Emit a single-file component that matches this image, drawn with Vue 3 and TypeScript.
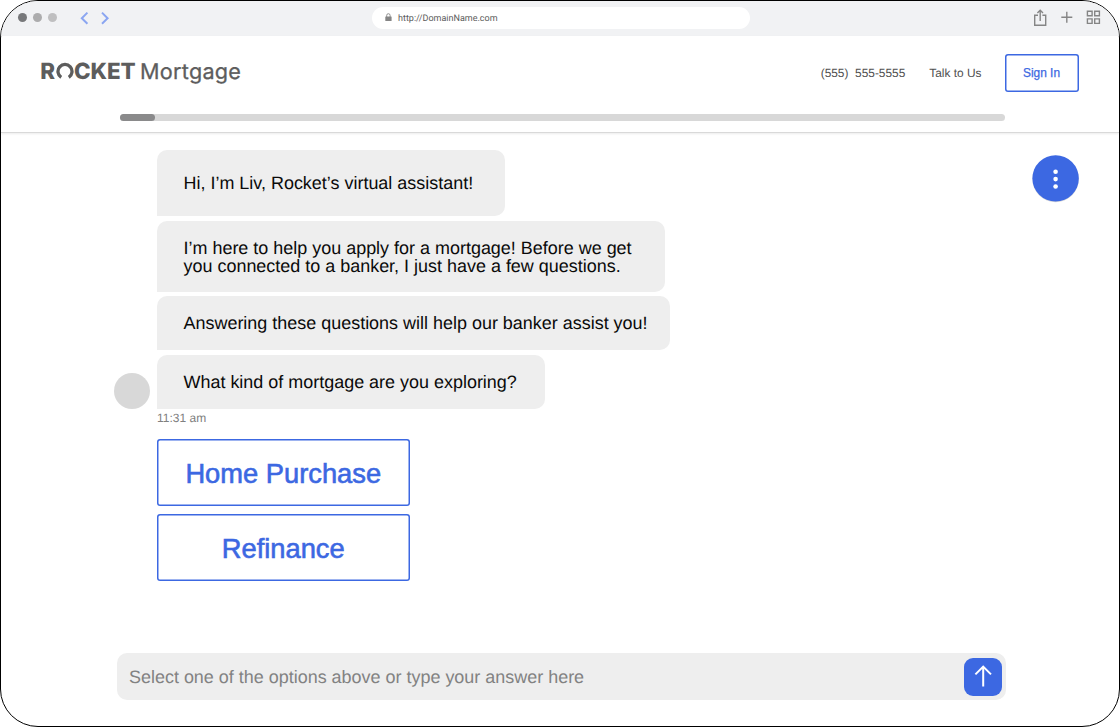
<script setup lang="ts">
interface Message {
  id: string
  lines: string[]
}

const messages: Message[] = [
  { id: 'greeting', lines: ['Hi, I’m Liv, Rocket’s virtual assistant!'] },
  {
    id: 'intro',
    lines: [
      'I’m here to help you apply for a mortgage! Before we get',
      'you connected to a banker, I just have a few questions.',
    ],
  },
  { id: 'reason', lines: ['Answering these questions will help our banker assist you!'] },
  { id: 'question', lines: ['What kind of mortgage are you exploring?'] },
]

const options: string[] = ['Home Purchase', 'Refinance']
const progress = 35 / 885
</script>

<template>
  <div class="window">
    <div class="chrome">
      <div class="dots"><i class="dot d1" /><i class="dot d2" /><i class="dot d3" /></div>
      <svg class="arrows" width="32" height="14" viewBox="0 0 32 14">
        <path d="M8.4 1.6 2.8 7.2l5.6 5.6M23 1.6l5.6 5.6-5.6 5.6" />
      </svg>
      <div class="address">
        <svg class="lock" width="7" height="9" viewBox="0 0 7 9">
          <path d="M1.7 4V2.4a1.7 1.7 0 0 1 3.4 0V4" fill="none" stroke="#858585" stroke-width=".9" />
          <rect x=".3" y="3.4" width="6.3" height="4.7" rx=".5" fill="#858585" />
        </svg>
        <span class="url">http://DomainName.com</span>
      </div>
      <svg class="tools" width="70" height="20" viewBox="0 0 70 20">
        <g fill="none" stroke="#858585" stroke-width="1.4">
          <path d="M5 7.2H1.7v10.1h11V7.2H9.4M7.2 13V2.6M4.4 5l2.8-2.8L10 5" />
          <path d="M28.3 9.3h11M33.8 3.8v11" />
          <path d="M54.4 3.2h4.7v4.5h-4.7zM61.7 3.2h4.7v4.5h-4.7zM54.4 10.9h4.7v4.5h-4.7zM61.7 10.9h4.7v4.5h-4.7z" />
        </g>
      </svg>
    </div>

    <header class="header">
      <div class="topbar">
        <div class="logo">
          <span class="rocket r">R</span>
          <svg class="ring" width="18" height="18" viewBox="0 0 18 18">
            <path d="M5.2 15.3A7 7 0 1 1 12.8 15.3" />
          </svg>
          <span class="rocket cket">CKET</span>
          <span class="mortgage">Mortgage</span>
        </div>
        <nav class="nav">
          <span class="phone">(555)&nbsp; 555-5555</span>
          <span class="talk">Talk to Us</span>
          <button class="signin">Sign In</button>
        </nav>
      </div>
      <div class="track"><div class="fill" :style="{ width: progress * 100 + '%' }" /></div>
    </header>

    <main class="body">
      <section class="chat">
        <div class="avatar" />
        <div class="thread">
          <div v-for="m in messages" :key="m.id" class="bubble" :class="m.id">
            <div v-for="(line, i) in m.lines" :key="i" class="line">{{ line }}</div>
          </div>
          <div class="time">11:31 am</div>
          <button v-for="(o, i) in options" :key="o" class="option" :class="'o' + i">{{ o }}</button>
        </div>
        <svg class="menu" width="48" height="49" viewBox="0 0 48 49">
          <circle cx="23.6" cy="25.1" r="23.2" fill="#000" opacity=".15" />
          <circle cx="23.6" cy="24.4" r="23.2" fill="#3c68e2" />
          <g fill="#fff">
            <circle cx="23.6" cy="17.7" r="2.3" /><circle cx="23.6" cy="25.1" r="2.3" /><circle cx="23.6" cy="32.5" r="2.3" />
          </g>
        </svg>
      </section>
      <div class="composer">
        <span class="placeholder">Select one of the options above or type your answer here</span>
        <button class="send">
          <svg width="38" height="38" viewBox="0 0 38 38">
            <path d="M19.2 28.4V8.6M11.4 16.4l7.8-7.8 7.8 7.8" />
          </svg>
        </button>
      </div>
    </main>
  </div>
</template>

<style>
body {
  background: #fff;
  overflow: hidden;
}
</style>

<style scoped>
* {
  box-sizing: border-box;
}
button {
  font: inherit;
  border: 0;
  padding: 0;
  background: none;
}
svg {
  display: block;
  flex: none;
}
.window {
  width: 1120px;
  height: 727px;
  border: 1px solid #000;
  border-radius: 38px;
  overflow: hidden;
  background: #fff;
  font-family: 'Liberation Sans', Arial, sans-serif;
  white-space: nowrap;
  text-rendering: geometricPrecision;
  display: flex;
  flex-direction: column;
}
.chrome {
  height: 35px;
  flex: none;
  background: #f1f2f4;
  display: flex;
  align-items: center;
  padding: 0 17px 2px 16.5px;
}
.dots {
  display: flex;
  gap: 6px;
}
.dot {
  width: 9px;
  height: 9px;
  border-radius: 50%;
}
.d1 { background: #77787a; }
.d2 { background: #acacad; }
.d3 { background: #bfbfc0; }
.arrows {
  margin: 1px 0 0 22.5px;
  fill: none;
  stroke: #8ba6f1;
  stroke-width: 2;
}
.address {
  width: 378px;
  height: 22px;
  margin-left: 260.5px;
  border-radius: 11px;
  background: #fff;
  display: flex;
  align-items: center;
  padding-left: 13px;
}
.url {
  margin: 2px 0 0 6.5px;
  font-family: Roboto, sans-serif;
  font-size: 9px;
  color: #5c5c5c;
}
.tools {
  margin-left: auto;
  margin-right: -1px;
}
.header {
  height: 97px;
  flex: none;
  border-bottom: 1px solid #d9d9d9;
  box-shadow: 0 1px 2px rgba(0, 0, 0, 0.08);
}
.topbar {
  height: 78px;
  padding: 0 40.5px 0 39.2px;
  display: flex;
  justify-content: space-between;
}
.logo {
  display: flex;
  align-items: baseline;
  padding-top: 22px;
  height: 56px;
  color: #5d5d5d;
  line-height: 28px;
}
.rocket {
  font-family: Inter, sans-serif;
  font-weight: 800;
  font-size: 22.4px;
  letter-spacing: -0.1px;
}
.ring {
  align-self: flex-start;
  margin: 3.5px 0.4px 0 0.6px;
  fill: none;
  stroke: #5d5d5d;
  stroke-width: 3.3;
}
.mortgage {
  margin-left: 4.6px;
  font-family: Inter, sans-serif;
  font-size: 21.6px;
  letter-spacing: 0.27px;
  -webkit-text-stroke: 0.3px #5d5d5d;
}
.nav {
  display: flex;
  align-items: center;
  height: 38px;
  margin-top: 18px;
  font-size: 11.9px;
  color: #505050;
}
.talk {
  margin-left: 24px;
}
.signin {
  width: 74px;
  height: 38px;
  margin-left: 23px;
  border-radius: 3px;
  box-shadow: inset 0 0 0 1.5px #3c68e2;
  color: #3c68e2;
  -webkit-text-stroke: 0.25px #3c68e2;
}
.track {
  width: 885px;
  height: 7px;
  margin-left: 119px;
  border-radius: 4px;
  background: #d8d8d8;
}
.fill {
  height: 7px;
  border-radius: 4px;
  background: #8a8a8b;
}
.body {
  flex: 1;
  display: flex;
  flex-direction: column;
  padding: 17px 40px 26px 113px;
}
.chat {
  display: flex;
  align-items: flex-start;
}
.avatar {
  width: 36px;
  height: 36px;
  margin-top: 223px;
  border-radius: 50%;
  background: #d8d8d8;
}
.thread {
  margin-left: 7px;
  display: flex;
  flex-direction: column;
  align-items: flex-start;
}
.bubble {
  background: #eee;
  border-radius: 10px 10px 10px 0;
  padding-left: 26.5px;
  display: flex;
  flex-direction: column;
  justify-content: center;
  font-size: 17.97px;
  line-height: 18px;
  color: #0a0a0a;
}
.greeting { width: 348px; height: 66px; }
.intro { width: 507.5px; height: 71px; margin-top: 5px; }
.reason { width: 513px; height: 54px; margin-top: 4px; }
.question { width: 387.5px; height: 54px; margin-top: 5px; }
.time {
  margin-top: 2px;
  height: 14px;
  line-height: 14px;
  font-size: 12px;
  color: #808080;
}
.option {
  width: 252.5px;
  height: 67px;
  padding-top: 3px;
  border-radius: 3px;
  box-shadow: inset 0 0 0 1.5px #3c68e2;
  color: #3c68e2;
  font-size: 27.3px;
  -webkit-text-stroke: 0.6px #3c68e2;
}
.o0 { margin-top: 14px; }
.o1 { margin-top: 8px; }
.menu {
  margin: 4px -1px 0 auto;
}
.composer {
  width: 889px;
  height: 47px;
  margin: auto 0 0 3px;
  padding: 0 4px 0 12px;
  border-radius: 10px;
  background: #eee;
  display: flex;
  align-items: center;
  justify-content: space-between;
}
.placeholder {
  padding-top: 2px;
  font-size: 17.97px;
  color: #828282;
}
.send {
  width: 38px;
  height: 38px;
  border-radius: 9px;
  background: #3c68e2;
}
.send svg {
  fill: none;
  stroke: #fff;
  stroke-width: 2;
}
</style>
